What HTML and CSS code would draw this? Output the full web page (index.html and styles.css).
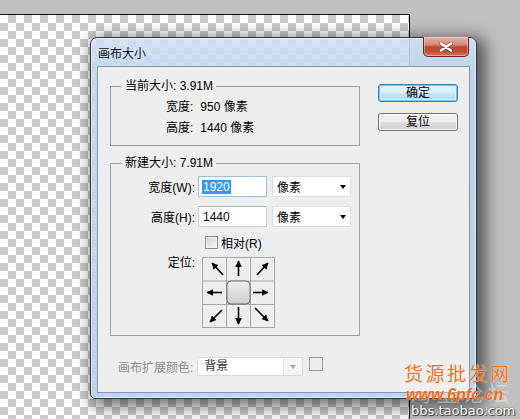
FILE: index.html
```html
<!DOCTYPE html>
<html>
<head>
<meta charset="utf-8">
<link rel="stylesheet" href="styles.css">
</head>
<body>
<div class="canvas"></div>

<div class="dialog">
  <div class="titlebar">
    <span class="title">画布大小</span>
    <div class="close">
      <svg width="14" height="10" viewBox="0 0 14 10">
        <path d="M2 1.5 L12 8.5 M12 1.5 L2 8.5" stroke="#5a2418" stroke-width="3.8" stroke-linecap="round" opacity="0.55"/>
        <path d="M2 1.5 L12 8.5 M12 1.5 L2 8.5" stroke="#ffffff" stroke-width="2.4" stroke-linecap="round"/>
      </svg>
    </div>
  </div>
  <div class="client">
    <div class="main">
      <fieldset class="group g1">
        <legend>当前大小: 3.91M</legend>
        <div class="info"><span class="k">宽度:</span><span class="v">950 像素</span></div>
        <div class="info"><span class="k">高度:</span><span class="v">1440 像素</span></div>
      </fieldset>
      <fieldset class="group g2">
        <legend>新建大小: 7.91M</legend>
        <div class="form">
          <span class="lbl">宽度(W):</span>
          <div class="ctl">
            <div class="input focus"><span class="sel">1920</span></div>
            <div class="select"><span>像素</span><span class="tri"></span></div>
          </div>
          <span class="lbl">高度(H):</span>
          <div class="ctl">
            <div class="input"><span class="val">1440</span></div>
            <div class="select"><span>像素</span><span class="tri"></span></div>
          </div>
          <span></span>
          <div class="ctl check"><span class="box"></span><span>相对(R)</span></div>
          <span class="lbl top">定位:</span>
          <div class="ctl">
            <svg class="anchor" width="74" height="72" viewBox="0 0 74 72">
              <defs>
                <marker id="ah" viewBox="0 0 10 10" refX="9" refY="5" markerWidth="4.2" markerHeight="4.2" orient="auto">
                  <path d="M0 0 L10 5 L0 10 Z" fill="#000"/>
                </marker>
                <linearGradient id="cg" x1="0" y1="0" x2="0" y2="1">
                  <stop offset="0" stop-color="#f0f0f0"/>
                  <stop offset="1" stop-color="#cdcdcd"/>
                </linearGradient>
              </defs>
              <g stroke="#a7a7a7" stroke-width="1" fill="none">
                <rect x="0.5" y="0.5" width="72" height="70"/>
                <line x1="24.5" y1="0" x2="24.5" y2="71"/>
                <line x1="48.5" y1="0" x2="48.5" y2="71"/>
                <line x1="0" y1="24" x2="73" y2="24"/>
                <line x1="0" y1="47.5" x2="73" y2="47.5"/>
              </g>
              <rect x="25" y="24" width="23" height="23" rx="4" fill="url(#cg)" stroke="#6f6f6f"/>
              <g stroke="#000" stroke-width="1.6" marker-end="url(#ah)">
                <line x1="21" y1="18" x2="10" y2="6"/>
                <line x1="36.5" y1="19" x2="36.5" y2="4"/>
                <line x1="55" y1="18" x2="66" y2="6"/>
                <line x1="20" y1="35.5" x2="5" y2="35.5"/>
                <line x1="51" y1="35.5" x2="66" y2="35.5"/>
                <line x1="20" y1="53" x2="8" y2="65"/>
                <line x1="36.5" y1="50" x2="36.5" y2="67"/>
                <line x1="53" y1="51" x2="66" y2="64"/>
              </g>
            </svg>
          </div>
        </div>
      </fieldset>
      <div class="ext">
        <span class="ext-label">画布扩展颜色:</span>
        <div class="dsel"><span class="dtext">背景</span><span class="darr"><span class="tri gray"></span></span></div>
        <span class="swatch"></span>
      </div>
    </div>
    <div class="side">
      <div class="btn primary">确定</div>
      <div class="btn">复位</div>
    </div>
  </div>
</div>

<div class="wm-tb">淘宝论坛</div>
<div class="wm-cn">货源批发网</div>
<div class="wm-www">www.6pfc.cn</div>
<div class="wm-bbs">bbs.taobao.com</div>
</body>
</html>
```

FILE: styles.css
```css
html, body {
  margin: 0;
  padding: 0;
}
body {
  width: 520px;
  height: 419px;
  overflow: hidden;
  position: relative;
  background: #c0c0c0;
  font: 12px "Liberation Sans", "Noto Sans CJK SC", sans-serif;
  color: #000;
}

.canvas {
  margin-top: 14px;
  width: 409px;
  height: 404px;
  border-top: 1px solid #111;
  border-right: 1px solid #111;
  background: repeating-conic-gradient(#cccccc 0 25%, #ffffff 0 50%) 0 0 / 16px 16px;
}

.dialog {
  position: absolute;
  left: 90px;
  top: 37px;
  width: 387px;
  height: 362px;
  box-sizing: border-box;
  border: 1px solid #2e3844;
  border-radius: 7px 7px 5px 5px;
  padding: 0 6px 5px;
  display: flex;
  flex-direction: column;
  background: linear-gradient(180deg, rgba(208,226,246,0.86) 0, rgba(194,216,240,0.88) 28px, rgba(186,210,237,0.9) 100%);
  box-shadow: inset 0 0 0 1px rgba(255,255,255,0.45), 5px 4px 16px 4px rgba(0,0,0,0.55);
}

.titlebar {
  height: 28px;
  flex: none;
  display: flex;
  align-items: center;
  justify-content: space-between;
}
.title {
  padding-left: 1px;
  font-size: 12px;
  color: #111;
}
.close {
  align-self: flex-start;
  margin-top: -1px;
  margin-right: 1px;
  width: 46px;
  height: 20px;
  box-sizing: border-box;
  border: 1px solid #5e2a22;
  border-top: none;
  border-radius: 0 0 5px 5px;
  background: linear-gradient(180deg, #e6b0a4 0, #d58a78 40%, #bf4a30 52%, #c04a2e 75%, #d57a60 100%);
  box-shadow: inset 0 0 0 1px rgba(255,255,255,0.35);
  display: flex;
  align-items: center;
  justify-content: center;
}

.client {
  flex: 1;
  display: flex;
  background: #eeeeee;
  border: 1px solid #8397ae;
}

.main {
  padding: 12px 0 0 12px;
  width: 250px;
}

.group {
  margin: 0;
  padding: 0 0 6px;
  width: 250px;
  min-width: 0;
  box-sizing: border-box;
  border: 1px solid #a3a3a3;
}
.group legend {
  margin-left: 11px;
  padding: 0 3px;
  line-height: 14px;
}
.g1 {
  padding-top: 4px;
}
.info {
  line-height: 21px;
  padding-left: 55px;
}
.info .v {
  margin-left: 7px;
}

.g2 {
  margin-top: 10px;
  padding-top: 6px;
}
.form {
  display: grid;
  grid-template-columns: 84px auto;
  column-gap: 3px;
  row-gap: 9px;
  align-items: center;
}
.lbl {
  text-align: right;
  white-space: nowrap;
}
.lbl.top {
  align-self: start;
  line-height: 13px;
}
.ctl {
  display: flex;
  align-items: center;
  gap: 5px;
}
.input {
  width: 69px;
  height: 21px;
  box-sizing: border-box;
  border: 1px solid #c6d2de;
  border-top-color: #abb6c2;
  background: #fff;
  padding-left: 3px;
  display: flex;
  align-items: center;
}
.input.focus {
  border-color: #9fc0de;
}
.sel {
  background: #3399ff;
  color: #fff;
  line-height: 14px;
  padding: 0 1px;
}
.val {
  padding-left: 1px;
}
.select {
  width: 79px;
  height: 21px;
  box-sizing: border-box;
  border: 1px solid #dedede;
  background: #fff;
  display: flex;
  align-items: center;
  justify-content: space-between;
  padding: 0 4px;
}
.tri {
  width: 0;
  height: 0;
  border-left: 3.5px solid transparent;
  border-right: 3.5px solid transparent;
  border-top: 4px solid #000;
}
.tri.gray {
  border-top-color: #a8a8a8;
}

.check {
  height: 12px;
  gap: 3px;
  margin-left: 7px;
}
.box {
  width: 13px;
  height: 13px;
  box-sizing: border-box;
  border: 1px solid #8e8f8f;
  background: linear-gradient(135deg, #d0d3d7 0, #f6f6f6 100%);
  box-shadow: inset 0 0 0 1px #f4f4f4;
}

.anchor {
  display: block;
  margin-left: 4px;
}

.ext {
  display: flex;
  align-items: center;
  margin-top: 21px;
  padding-left: 8px;
  gap: 4px;
}
.ext-label {
  color: #8c8c8c;
  white-space: nowrap;
}
.dsel {
  width: 106px;
  height: 19px;
  box-sizing: border-box;
  border: 1px solid #dadada;
  background: #fff;
  display: flex;
  align-items: stretch;
}
.dtext {
  flex: 1;
  padding-left: 6px;
  line-height: 17px;
  color: #333;
}
.darr {
  width: 18px;
  background: #f5f5f5;
  border-left: 1px solid #e6e6e6;
  display: flex;
  align-items: center;
  justify-content: center;
}
.swatch {
  width: 14px;
  height: 14px;
  box-sizing: border-box;
  border: 1px solid #a3a3a3;
  margin-left: 2px;
  align-self: flex-start;
}

.side {
  margin-left: 18px;
  padding-top: 17px;
  display: flex;
  flex-direction: column;
  gap: 11px;
}
.btn {
  width: 80px;
  height: 18px;
  box-sizing: border-box;
  border: 1px solid #707070;
  border-radius: 3px;
  background: linear-gradient(180deg, #f3f3f3 0, #ebebeb 48%, #dddddd 52%, #cfcfcf 100%);
  box-shadow: inset 0 0 0 1px rgba(255,255,255,0.85);
  text-align: center;
  line-height: 16px;
}
.btn.primary {
  border-color: #3a7fae;
  background: linear-gradient(180deg, #e6f5fd 0, #d7eefb 48%, #c3e5f8 52%, #b2dcf4 100%);
  box-shadow: inset 0 0 0 1px #72c4ee, inset 0 0 0 2px #d9f1fd;
}

.wm-tb {
  position: absolute;
  left: 410px;
  top: 380px;
  font: 21px/24px "Noto Sans CJK SC", sans-serif;
  letter-spacing: 5px;
  color: rgba(255,255,255,0.4);
}
.wm-cn {
  position: absolute;
  left: 404px;
  top: 361px;
  font: 19px/24px "Noto Sans CJK SC", sans-serif;
  letter-spacing: 2.5px;
  color: #f2711c;
  text-shadow: 0 0 1px #fff;
}
.wm-www {
  position: absolute;
  left: 406px;
  top: 386px;
  font: italic bold 16px/18px "Liberation Sans", sans-serif;
  letter-spacing: 0;
  color: #f06a14;
  text-shadow: 0 0 1px #fff;
}
.wm-bbs {
  position: absolute;
  left: 411px;
  top: 402px;
  font: 13px/17px "DejaVu Sans", sans-serif;
  color: #fff;
  text-shadow: 1px 1px 1px #333, 0 0 2px #444;
}
```
